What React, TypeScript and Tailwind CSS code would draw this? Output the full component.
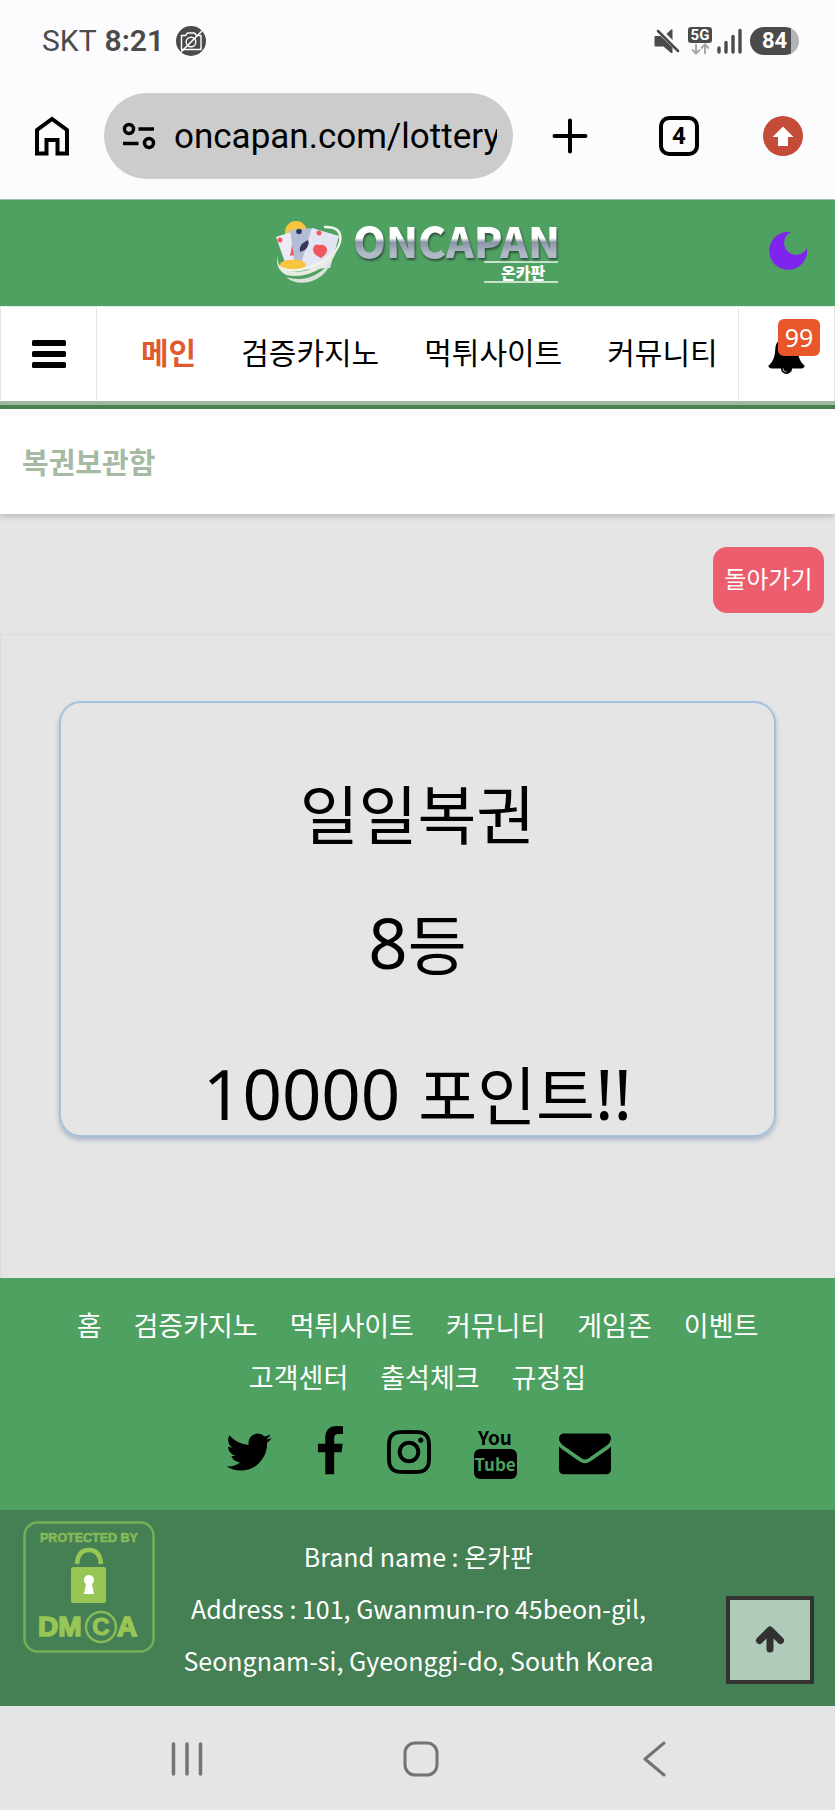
import type { ReactNode } from 'react';

const menuItems = ['메인', '검증카지노', '먹튀사이트', '커뮤니티'];

const footerLinks = [
    '홈',
    '검증카지노',
    '먹튀사이트',
    '커뮤니티',
    '게임존',
    '이벤트',
    '고객센터',
    '출석체크',
    '규정집',
];

function StatusBar() {
    return (
        <div className="flex h-[82px] items-center justify-between pl-[42px] pr-9 text-[#4b4b4b] font-[Roboto,sans-serif]">
            <div className="flex items-center text-[30px] leading-9">
                <span>SKT</span>
                <span className="ml-2 font-semibold">8:21</span>
                {/* Camera off */}
                <svg viewBox="0 0 30 30" className="ml-3 h-[30px] w-[30px]" fill="none">
                    <circle cx="15" cy="15" r="15" fill="#4b4b4b" />
                    <path
                        d="M5.500 9.500h4l2-2.500h7l2 2.500h4.500v14h-19.500z"
                        stroke="#fff"
                        strokeWidth="1.400"
                        strokeLinejoin="round"
                    />
                    <circle cx="15" cy="16" r="4.800" stroke="#fff" strokeWidth="1.400" />
                    <path d="M5 26L26 5" stroke="#fff" strokeWidth="1.600" />
                </svg>
            </div>
            <div className="flex items-center">
                {/* Muted speaker */}
                <svg viewBox="0 0 26 26" className="h-[26px] w-[26px]" fill="#4b4b4b">
                    <path d="M1.500 8h5l12 11.500V25h-1.500l-7.500-6.500H1.500Q.5 18.500.5 17.500V9q0-1 1-1z" />
                    <path d="M12.500 6L17 1.500h1.500V12z" />
                    <path d="M4 3L24 23" stroke="#4b4b4b" strokeWidth="2.600" strokeLinecap="round" />
                </svg>
                <div className="ml-2 flex flex-col items-center">
                    <span className="h-4 w-6 rounded-[3px] bg-[#4b4b4b] text-center text-[15px] font-bold leading-4 text-white">
                        5G
                    </span>
                    <svg viewBox="0 0 18 12" className="h-3 w-[18px]" fill="none" stroke="#a8a8aa" strokeWidth="2">
                        <path d="M5 1v9M1 6.500l4 4 4-4M14 11V2M10 5.500l4-4 4 4" />
                    </svg>
                </div>
                <svg viewBox="0 0 25 26" className="ml-[5px] h-[26px] w-[25px]" stroke="#4b4b4b" strokeWidth="3.400" strokeLinecap="round">
                    <path d="M2 20v4M9 14.500V24M16 8.500V24M23 2.500V24" />
                </svg>
                <span className="ml-2 h-7 w-[49px] rounded-full bg-[linear-gradient(90deg,#4b4b4b_84%,#b4b4b6_84%)] text-center text-[22px] font-bold leading-7 text-white">
                    84
                </span>
            </div>
        </div>
    );
}

function BrowserBar() {
    return (
        <div className="flex h-[117px] items-center pb-2.5 pl-[34px] pr-8">
            <button aria-label="홈 화면">
                <svg viewBox="0 0 36 40" className="h-10 w-9" fill="none" stroke="#000" strokeWidth="4">
                    <path d="M3 37.500V14L18 3l15 11v23.500h-9.500V24h-11v13.500z" />
                </svg>
            </button>
            <div className="ml-[34px] flex h-[86px] min-w-0 flex-1 items-center rounded-full bg-[#cccccd] pl-[18px] pr-4">
                <svg viewBox="0 0 34 30" className="h-[30px] w-[34px] shrink-0" fill="none" stroke="#000" strokeWidth="3.500">
                    <circle cx="7" cy="8" r="4.500" />
                    <path d="M16.500 8H32M1 22.500h15.500" />
                    <circle cx="27" cy="22" r="4.500" />
                </svg>
                <input
                    type="text"
                    aria-label="주소창"
                    readOnly
                    defaultValue="oncapan.com/lottery"
                    className="ml-[18px] min-w-0 flex-1 bg-transparent pt-0.5 text-[35px] leading-[44px] text-black outline-none font-[Roboto,sans-serif]"
                />
            </div>
            <button aria-label="새 탭" className="ml-[39px]">
                <svg viewBox="0 0 36 36" className="h-9 w-9" stroke="#000" strokeWidth="4" strokeLinecap="round">
                    <path d="M18 2.500v31M2.500 18h31" />
                </svg>
            </button>
            <button className="ml-[71px] h-10 w-10 rounded-[10px] border-4 border-black text-center text-[24px] font-bold leading-8 text-black font-[Roboto,sans-serif]">
                4
            </button>
            <button aria-label="업데이트" className="ml-16">
                <svg viewBox="0 0 40 40" className="h-10 w-10">
                    <circle cx="20" cy="20" r="20" fill="#c44b37" />
                    <path d="M20 10.500L30.500 21H25v9H15v-9H9.500z" fill="#fff" />
                </svg>
            </button>
        </div>
    );
}

function CardsEmblem() {
    return (
        <svg viewBox="0 0 68 62" className="h-[62px] w-[68px]" fill="none">
            <circle cx="21" cy="11" r="11" fill="#f9c440" />
            <path d="M1 16l21-7 8 30-18 8z" fill="#eceaf3" />
            <path d="M15 9l25-2-3 38-17 2z" fill="#b4bdd8" />
            <path d="M37 7l27 8-9 32-31 2z" fill="#e4e5f3" />
            <circle cx="5" cy="19" r="2.500" fill="#ee5b62" />
            <circle cx="24" cy="10.500" r="2.800" fill="#34375c" />
            <circle cx="44" cy="12" r="2.500" fill="#ee5b62" />
            <path d="M33 19q2 5-3 10l-5 2q-1-6 3-9z" fill="#34375c" />
            <path d="M17 24l-2 11 4-1z" fill="#ee5b62" />
            <path d="M46 37q-8-3-8-9 1-6 7-4 5-1 7 4 1 5-6 9z" fill="#ef585c" />
            <ellipse cx="18" cy="44" rx="13" ry="5.500" fill="#f9c440" />
            <path d="M49 6q19-1 16 15-5 17-30 25Q15 53 5 46" stroke="#f2f5ee" strokeWidth="2.400" />
            <path d="M3 34Q1 44 10 49q17 6 37-7 11-7 15-15-1 11-14 19-19 12-37 8Q-1 47 3 34z" fill="#e6ece2" />
            <path d="M11 56q25 8 46-16-7 17-23 21-14 3-23-5z" fill="#d8e2d5" />
        </svg>
    );
}

function SiteHeader() {
    return (
        <header className="relative flex h-[107px] items-start justify-center border-t border-[#a4bdad] bg-[#4fa161] pt-[21px]">
            <a href="#" className="flex">
                <CardsEmblem />
                <span className="ml-2.5 flex flex-col">
                    <span className="bg-[linear-gradient(180deg,#fff_45%,#8995a6_56%,#b0b9c6_85%)] bg-clip-text text-[42px] font-black leading-[38px] text-transparent drop-shadow-[1px_2px_1px_#30503c]">
                        ONCAPAN
                    </span>
                    <span className="mr-0.5 mt-0.5 w-[74px] self-end border-y-2 border-[#c6e2cc] pl-1 text-center text-[16px] font-black leading-[18px] text-white">
                        온카판
                    </span>
                </span>
            </a>
            <button aria-label="다크 모드" className="absolute right-7 top-8">
                <svg viewBox="0 0 38 38" className="h-[38px] w-[38px]" fill="#7f24ef">
                    <path d="M22 0A19 19 0 1 0 38 16A12 12 0 1 1 22 0z" />
                </svg>
            </button>
        </header>
    );
}

function MainNav() {
    return (
        <nav className="flex h-[95px] border-t border-[#e3efe5] bg-white">
            <button aria-label="전체 메뉴" className="flex w-[97px] shrink-0 items-center justify-center border-x border-[#e8e8e8]">
                <svg viewBox="0 0 34 28" className="h-7 w-[34px]">
                    <rect width="34" height="6" rx="1.500" />
                    <rect y="11" width="34" height="6" rx="1.500" />
                    <rect y="22" width="34" height="6" rx="1.500" />
                </svg>
            </button>
            <ul className="flex min-w-0 flex-1 items-center gap-[45px] overflow-hidden whitespace-nowrap pb-1.5 pl-11 text-[30px] leading-[44px]">
                {menuItems.map((item, i) => (
                    <li key={item}>
                        <a href="#" className={i === 0 ? 'font-bold text-[#e05a30]' : 'text-black'}>
                            {item}
                        </a>
                    </li>
                ))}
            </ul>
            <button aria-label="알림" className="relative flex w-[97px] shrink-0 items-center justify-center border-x border-[#e8e8e8]">
                <svg viewBox="0 0 1792 1792" className="h-[39px] w-[39px]">
                    <path d="M912 1696q0-16-16-16-59 0-101.500-42.500t-42.500-101.500q0-16-16-16t-16 16q0 73 51.500 124.500t124.500 51.500q16 0 16-16zm816-288q0 52-38 90t-90 38h-448q0 106-75 181t-181 75-181-75-75-181h-448q-52 0-90-38t-38-90q50-42 91-88t85-119.500 74.500-158.500 50-206 19.500-260q0-152 117-282.500t307-158.500q-8-19-8-39 0-40 28-68t68-28 68 28 28 68q0 20-8 39 190 28 307 158.500t117 282.500q0 139 19.500 260t50 206 74.500 158.500 85 119.500 91 88z" />
                </svg>
                <span className="absolute right-3.5 top-3 h-[37px] w-[42px] rounded-md bg-[#e8562a] text-center text-[25px] leading-9 text-white font-['Noto_Sans',sans-serif]">
                    99
                </span>
            </button>
        </nav>
    );
}

/* Digits and punctuation run a little larger than the Hangul */
function Latin({ children }: { children: ReactNode }) {
    return <span className="text-[69px] font-['Noto_Sans',sans-serif]">{children}</span>;
}

function LotteryResult() {
    return (
        <main className="bg-[#e5e5e5]">
            <div className="flex justify-end px-[11px] pb-[21px] pt-[33px]">
                <button className="h-[66px] w-[111px] rounded-[14px] bg-[#ec5e6e] pb-1 text-[24px] text-white">
                    돌아가기
                </button>
            </div>
            <div className="border border-b-0 border-[#dcdcdc] px-[58px] pb-[141px] pt-[66px]">
                <section className="h-[436px] rounded-[22px] border-2 border-[#a3c1dc] pt-[61px] text-center text-[64px] leading-[94px] text-black shadow-[0_3px_5px_#a9b3c2]">
                    <p>일일복권</p>
                    <p className="mt-9">
                        <Latin>8</Latin>등
                    </p>
                    <p className="mt-14">
                        <Latin>10000 </Latin>포인트<Latin>!!</Latin>
                    </p>
                </section>
            </div>
        </main>
    );
}

function SocialLinks() {
    return (
        <div className="mt-[23px] flex justify-center gap-[42px]">
            <a href="#" aria-label="Twitter">
                <svg viewBox="64 0 1664 1792" className="h-[52px] w-12">
                    <path d="M1684 408q-67 98-162 167 1 14 1 42 0 130-38 259.500t-115.500 248.500-184.500 210.500-258 146-323 54.500q-271 0-496-145 35 4 78 4 225 0 401-138-105-2-188-64.500t-114-159.500q33 5 61 5 43 0 85-11-112-23-185.500-111.500t-73.500-205.500v-4q68 38 146 41-66-44-105-115t-39-154q0-88 44-163 121 149 294.500 238.500t371.500 99.500q-8-38-8-74 0-134 94.500-228.500t228.500-94.500q140 0 236 102 109-21 205-78-37 115-142 178 93-10 186-50z" />
                </svg>
            </a>
            <a href="#" aria-label="Facebook">
                <svg viewBox="384 0 1024 1792" className="h-[52px] w-[30px]">
                    <path d="M1343 12v264h-157q-86 0-116 36t-30 108v189h293l-39 296h-254v759h-306v-759h-255v-296h255v-218q0-186 104-288.500t277-102.500q147 0 228 12z" />
                </svg>
            </a>
            <a href="#" aria-label="Instagram">
                <svg viewBox="128 0 1536 1792" className="h-[52px] w-11">
                    <path d="M1152 896q0-106-75-181t-181-75-181 75-75 181 75 181 181 75 181-75 75-181zm138 0q0 164-115 279t-279 115-279-115-115-279 115-279 279-115 279 115 115 279zm108-410q0 38-27 65t-65 27-65-27-27-65 27-65 65-27 65 27 27 65zm-502-220q-7 0-76.500-.5t-105.500 0-96.500 3-103 10-71.500 18.500q-50 20-88 58t-58 88q-11 29-18.500 71.500t-10 103-3 96.500 0 105.500.5 76.500-.5 76.500 0 105.500 3 96.500 10 103 18.500 71.500q20 50 58 88t88 58q29 11 71.500 18.500t103 10 96.500 3 105.500 0 76.500-.5 76.500.5 105.500 0 96.500-3 103-10 71.500-18.500q50-20 88-58t58-88q11-29 18.500-71.500t10-103 3-96.500 0-105.500-.5-76.500.5-76.500 0-105.500-3-96.500-10-103-18.500-71.500q-20-50-58-88t-88-58q-29-11-71.500-18.500t-103-10-96.500-3-105.500 0-76.500.5zm768 630q0 229-5 317-10 208-124 322t-322 124q-88 5-317 5t-317-5q-208-10-322-124t-124-322q-5-88-5-317t5-317q10-208 124-322t322-124q88-5 317-5t317 5q208 10 322 124t124 322q5 88 5 317z" />
                </svg>
            </a>
            <a href="#" aria-label="YouTube">
                <svg viewBox="0 0 44 52" className="h-[52px] w-11 overflow-visible font-bold">
                    <text x="22" y="19" textAnchor="middle" fontSize="19">You</text>
                    <rect x="1" y="23" width="43" height="30" rx="6" />
                    <text x="22" y="45" textAnchor="middle" fontSize="17" fill="#4fa161">Tube</text>
                </svg>
            </a>
            <a href="#" aria-label="Email">
                <svg viewBox="0 0 1792 1792" className="h-[52px] w-[52px]">
                    <path d="M1792 710v794q0 66-47 113t-113 47h-1472q-66 0-113-47t-47-113v-794q44 49 101 87 362 246 497 345 57 42 92.500 65.500t94.500 48 110 24.500h2q51 0 110-24.500t94.500-48 92.500-65.500q170-123 498-345 57-39 100-87zm0-294q0 79-49 151t-122 123q-376 261-468 325-10 7-42.500 31t-54 38.500-52 32.500-57.500 27-50 9h-2q-23 0-50-9t-57.500-27-52-32.500-54-38.500-42.500-31q-91-64-262-182.500t-205-142.500q-62-42-117-115.500t-55-136.500q0-78 41.500-130t118.500-52h1472q65 0 112.500 47t47.500 113z" />
                </svg>
            </a>
        </div>
    );
}

function DmcaBadge() {
    return (
        <svg viewBox="0 0 132 132" className="h-[132px] w-[132px] font-['Liberation_Sans',sans-serif] font-bold" fill="#97c657">
            <rect x="1.500" y="1.500" width="129" height="129" rx="13" fill="none" stroke="#74ae56" strokeWidth="2.500" />
            <text x="66" y="21" textAnchor="middle" fontSize="12.500" fill="#86ba57" stroke="#86ba57" strokeWidth=".6">PROTECTED BY</text>
            <path d="M54 43q1-14 12-14t12 14" fill="none" stroke="#97c657" strokeWidth="4.500" />
            <rect x="48" y="46" width="35" height="36" rx="2" />
            <path d="M66 54a5 5 0 0 1 3 9l2 10H61l2-10a5 5 0 0 1 3-9z" fill="#fff" />
            <text x="15" y="115" fontSize="28" stroke="#97c657" strokeWidth="1.600">DM</text>
            <circle cx="78" cy="106" r="15" fill="none" stroke="#86ba57" strokeWidth="2.500" />
            <text x="78" y="114" textAnchor="middle" fontSize="24" stroke="#97c657">C</text>
            <text x="94" y="115" fontSize="28" stroke="#97c657" strokeWidth="1.600">A</text>
        </svg>
    );
}

function Footer() {
    return (
        <footer className="text-white">
            <div className="bg-[#4fa161] px-10 pb-8 pt-[21px]">
                <ul className="flex flex-wrap justify-center gap-x-8 text-[27px] leading-[52px]">
                    {footerLinks.map((link) => (
                        <li key={link}>
                            <a href="#">{link}</a>
                        </li>
                    ))}
                </ul>
                <SocialLinks />
            </div>
            <div className="grid grid-cols-[1fr_auto_1fr] bg-[#457f54] pb-5 pl-[23px] pr-[21px]">
                <div className="pt-[11px]">
                    <DmcaBadge />
                </div>
                <address className="pt-5 text-center text-[25px] not-italic leading-[52px]">
                    Brand name : 온카판
                    <br />
                    Address : 101, Gwanmun-ro 45beon-gil,
                    <br />
                    Seongnam-si, Gyeonggi-do, South Korea
                </address>
                <button
                    aria-label="맨 위로"
                    className="mb-0.5 flex h-[88px] w-[88px] items-center justify-center self-end justify-self-end border-4 border-[#323232] bg-[#b0cbb9]"
                >
                    <svg viewBox="0 0 30 30" className="h-[30px] w-[30px]" fill="none" stroke="#323232" strokeWidth="7" strokeLinecap="round" strokeLinejoin="round">
                        <path d="M4.500 15.500L15 5l10.500 10.500M15 7v17" />
                    </svg>
                </button>
            </div>
        </footer>
    );
}

function SystemNav() {
    return (
        <div className="flex h-[105px] items-center justify-center gap-[198px] bg-[#e5e5e5] pl-1.5">
            <button aria-label="최근 앱">
                <svg viewBox="0 0 36 36" className="h-9 w-9" stroke="#737373" strokeWidth="3.500" strokeLinecap="round">
                    <path d="M4.500 3v30M18 3v30M31.500 3v30" />
                </svg>
            </button>
            <button aria-label="홈">
                <svg viewBox="0 0 36 36" className="h-9 w-9" fill="none" stroke="#737373" strokeWidth="3">
                    <rect x="2" y="2" width="32" height="32" rx="10" />
                </svg>
            </button>
            <button aria-label="뒤로">
                <svg viewBox="0 0 36 36" className="h-9 w-9" fill="none" stroke="#737373" strokeWidth="3" strokeLinecap="round" strokeLinejoin="round">
                    <path d="M27 2L8 18l19 16" />
                </svg>
            </button>
        </div>
    );
}

export default function App() {
    return (
        <div className="w-full overflow-hidden bg-[#fcfcfe] font-['Noto_Sans_CJK_KR',sans-serif]">
            <StatusBar />
            <BrowserBar />
            <SiteHeader />
            <MainNav />
            {/* Page title */}
            <div className="border-t-4 border-[#9cb8a3] bg-white">
                <div className="relative h-[109px] border-t-4 border-[#46814f] bg-white px-[22px] shadow-[0_2px_6px_#b5b5b0]">
                    <h1 className="text-[29px] font-bold leading-[105px] text-[#a5b9a3]">복권보관함</h1>
                </div>
            </div>
            <LotteryResult />
            <Footer />
            <SystemNav />
        </div>
    );
}
